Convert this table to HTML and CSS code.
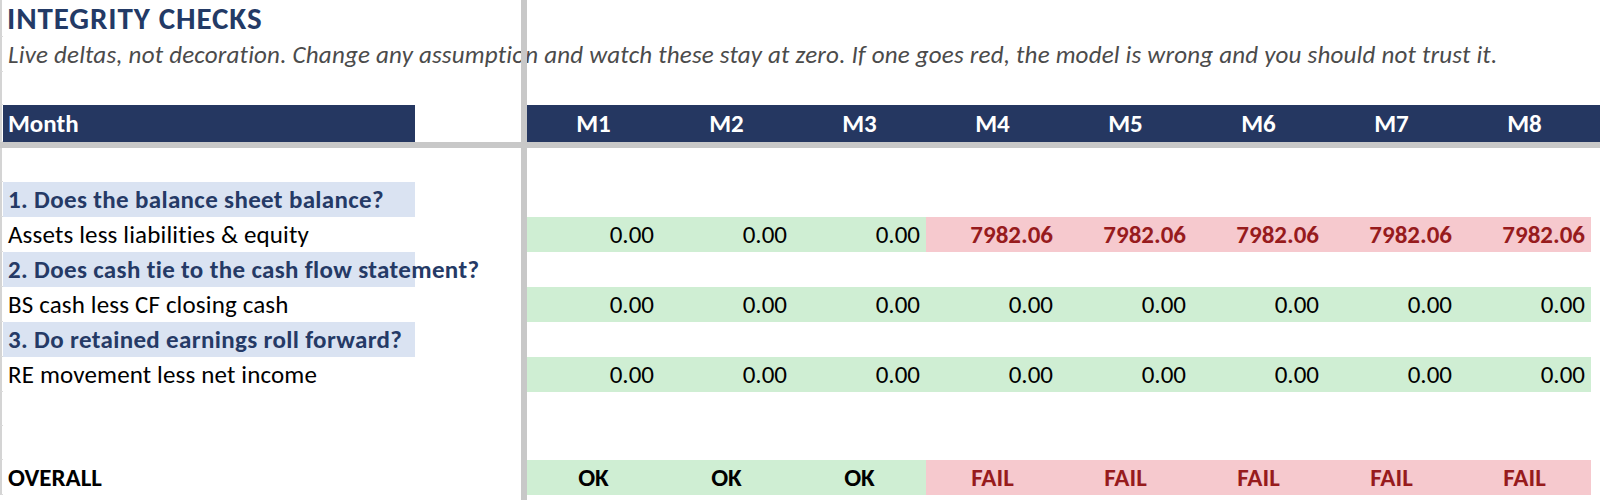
FILE: index.html
```html
<!DOCTYPE html>
<html lang="en">
<head>
<meta charset="utf-8">
<title>Integrity Checks</title>
<link rel="stylesheet" href="styles.css">
</head>
<body>
<div class="sheet">
  <div class="row title-row"><div class="cell a title">INTEGRITY CHECKS</div></div>
  <div class="row sub-row"><div class="cell a subtitle">Live deltas, not decoration. Change any assumption and watch these stay at zero. If one goes red, the model is wrong and you should not trust it.</div></div>
  <div class="row gap-row"></div>
  <div class="row head-row">
    <div class="cell a head-label">Month</div>
    <div class="cell b"></div>
    <div class="cell bar"></div>
    <div class="cell m head">M1</div>
    <div class="cell m head">M2</div>
    <div class="cell m head">M3</div>
    <div class="cell m head">M4</div>
    <div class="cell m head">M5</div>
    <div class="cell m head">M6</div>
    <div class="cell m head">M7</div>
    <div class="cell m head">M8</div>
    <div class="cell head"></div>
  </div>
  <div class="hbar"></div>
  <div class="row blank-row"></div>

  <div class="row data-row"><div class="cell a section">1. Does the balance sheet balance?</div></div>
  <div class="row data-row">
    <div class="cell a label">Assets less liabilities &amp; equity</div>
    <div class="cell b"></div>
    <div class="cell bar"></div>
    <div class="cell m num good">0.00</div>
    <div class="cell m num good">0.00</div>
    <div class="cell m num good">0.00</div>
    <div class="cell m num bad">7982.06</div>
    <div class="cell m num bad">7982.06</div>
    <div class="cell m num bad">7982.06</div>
    <div class="cell m num bad">7982.06</div>
    <div class="cell m num bad">7982.06</div>
  </div>
  <div class="row data-row"><div class="cell a section">2. Does cash tie to the cash flow statement?</div></div>
  <div class="row data-row">
    <div class="cell a label">BS cash less CF closing cash</div>
    <div class="cell b"></div>
    <div class="cell bar"></div>
    <div class="cell m num good">0.00</div>
    <div class="cell m num good">0.00</div>
    <div class="cell m num good">0.00</div>
    <div class="cell m num good">0.00</div>
    <div class="cell m num good">0.00</div>
    <div class="cell m num good">0.00</div>
    <div class="cell m num good">0.00</div>
    <div class="cell m num good">0.00</div>
  </div>
  <div class="row data-row"><div class="cell a section">3. Do retained earnings roll forward?</div></div>
  <div class="row data-row">
    <div class="cell a label">RE movement less net income</div>
    <div class="cell b"></div>
    <div class="cell bar"></div>
    <div class="cell m num good">0.00</div>
    <div class="cell m num good">0.00</div>
    <div class="cell m num good">0.00</div>
    <div class="cell m num good">0.00</div>
    <div class="cell m num good">0.00</div>
    <div class="cell m num good">0.00</div>
    <div class="cell m num good">0.00</div>
    <div class="cell m num good">0.00</div>
  </div>
  <div class="row spacer-row"></div>
  <div class="row spacer-row"></div>
  <div class="row data-row">
    <div class="cell a label strong">OVERALL</div>
    <div class="cell b"></div>
    <div class="cell bar"></div>
    <div class="cell m status good">OK</div>
    <div class="cell m status good">OK</div>
    <div class="cell m status good">OK</div>
    <div class="cell m status bad">FAIL</div>
    <div class="cell m status bad">FAIL</div>
    <div class="cell m status bad">FAIL</div>
    <div class="cell m status bad">FAIL</div>
    <div class="cell m status bad">FAIL</div>
  </div>
  <div class="vbar"></div>
</div>
</body>
</html>
```

FILE: styles.css
```css
* { box-sizing: border-box; }

html, body {
  margin: 0;
  padding: 0;
  background: #ffffff;
}

body {
  width: 1600px;
  height: 500px;
  overflow: hidden;
  font-family: "Carlito", "Lato", sans-serif;
  color: #000;
}

.sheet {
  position: relative;
  width: 1600px;
  height: 500px;
}

.row {
  display: grid;
  grid-template-columns: 3px 412px 106px 6px repeat(8, 133px) 1fr;
  position: relative;
}

.row::before {
  content: "";
  grid-column: 1;
  grid-row: 1;
  border-left: 2px solid #d4d4d4;
  border-bottom: 1px solid #dcdcdc;
}

.cell {
  white-space: nowrap;
  overflow: visible;
  min-width: 0;
}

.a { grid-column: 2; }

.title-row { height: 37px; }
.title {
  font-size: 31px;
  line-height: 37px;
  font-weight: 700;
  letter-spacing: 0.9px;
  color: #233a66;
  padding-left: 4px;
}

.sub-row { height: 35px; }
.subtitle {
  font-size: 25px;
  line-height: 35px;
  font-style: italic;
  letter-spacing: 0.2px;
  color: #4b4b4b;
  padding-left: 5px;
}

.gap-row { height: 33px; }

.head-row { height: 37px; }
.head-row .cell {
  font-size: 25px;
  line-height: 37px;
  font-weight: 700;
  color: #ffffff;
}
.head-row .head,
.head-row .head-label { background: #253761; }
.head-label { padding-left: 5px; }
.head { text-align: center; }

.hbar {
  height: 6px;
  background: #c8c8c8;
}

.blank-row { height: 34px; }
.spacer-row { height: 34px; }

.data-row { height: 35px; }
.data-row .cell {
  font-size: 25px;
  line-height: 35px;
}

.section {
  background: #dae3f2;
  color: #253a66;
  font-weight: 700;
  letter-spacing: 0.35px;
  padding-left: 5px;
}

.label {
  padding-left: 5px;
  letter-spacing: 0.15px;
}
.strong { font-weight: 700; letter-spacing: 0; }

.num {
  text-align: right;
  padding-right: 6px;
}

.status {
  text-align: center;
  font-weight: 700;
}

.good { background: #cfeed3; color: #000; }
.bad { background: #f6c9ce; color: #971b1d; font-weight: 700; }

.vbar {
  position: absolute;
  top: 0;
  left: 521px;
  width: 6px;
  height: 100%;
  background: #c8c8c8;
}
```
